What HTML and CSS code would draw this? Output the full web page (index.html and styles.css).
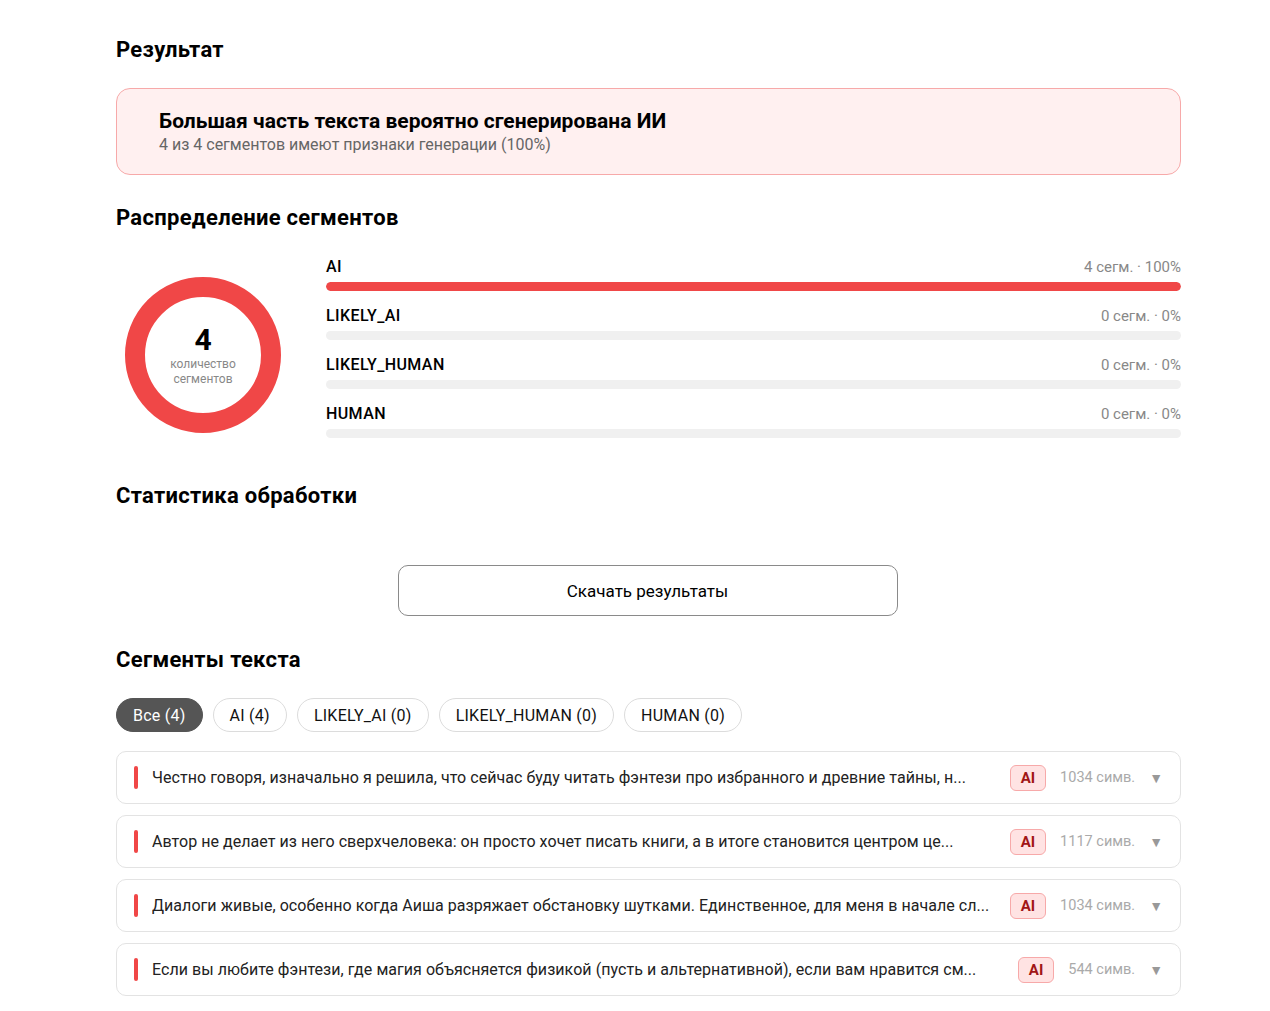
FILE: index.html
```html
<!DOCTYPE html>
<html lang="ru">
<head>
<meta charset="utf-8">
<title>Результат</title>
<link rel="stylesheet" href="styles.css">
</head>
<body>
<main class="page">
  <h2 class="h">Результат</h2>
  <div class="verdict">
    <div class="verdict-title">Большая часть текста вероятно сгенерирована ИИ</div>
    <div class="verdict-sub">4 из 4 сегментов имеют признаки генерации (100%)</div>
  </div>

  <h2 class="h h-dist">Распределение сегментов</h2>
  <div class="dist">
    <div class="donut">
      <svg width="156" height="156" viewBox="0 0 156 156">
        <circle cx="78" cy="78" r="68" fill="none" stroke="#f04747" stroke-width="20"/>
      </svg>
      <div class="donut-center">
        <div class="donut-num">4</div>
        <div class="donut-lbl">количество<br>сегментов</div>
      </div>
    </div>
    <div class="bars">
      <div class="bar-row">
        <div class="bar-head"><span class="bar-name">AI</span><span class="bar-val">4 сегм. · 100%</span></div>
        <div class="bar-track"><div class="bar-fill" style="width:100%"></div></div>
      </div>
      <div class="bar-row">
        <div class="bar-head"><span class="bar-name">LIKELY_AI</span><span class="bar-val">0 сегм. · 0%</span></div>
        <div class="bar-track"><div class="bar-fill" style="width:0%"></div></div>
      </div>
      <div class="bar-row">
        <div class="bar-head"><span class="bar-name">LIKELY_HUMAN</span><span class="bar-val">0 сегм. · 0%</span></div>
        <div class="bar-track"><div class="bar-fill" style="width:0%"></div></div>
      </div>
      <div class="bar-row">
        <div class="bar-head"><span class="bar-name">HUMAN</span><span class="bar-val">0 сегм. · 0%</span></div>
        <div class="bar-track"><div class="bar-fill" style="width:0%"></div></div>
      </div>
    </div>
  </div>

  <h2 class="h h-stat">Статистика обработки</h2>
  <div class="dl-wrap"><button class="dl">Скачать результаты</button></div>

  <h2 class="h h-seg">Сегменты текста</h2>
  <div class="chips">
    <button class="chip chip-active">Все (4)</button>
    <button class="chip">AI (4)</button>
    <button class="chip">LIKELY_AI (0)</button>
    <button class="chip">LIKELY_HUMAN (0)</button>
    <button class="chip">HUMAN (0)</button>
  </div>

  <div class="segs">
    <div class="seg">
      <span class="seg-mark"></span>
      <span class="seg-text">Честно говоря, изначально я решила, что сейчас буду читать фэнтези про избранного и древние тайны, н...</span>
      <span class="badge">AI</span>
      <span class="seg-count">1034 симв.</span>
      <span class="seg-arrow">▼</span>
    </div>
    <div class="seg">
      <span class="seg-mark"></span>
      <span class="seg-text">Автор не делает из него сверхчеловека: он просто хочет писать книги, а в итоге становится центром це...</span>
      <span class="badge">AI</span>
      <span class="seg-count">1117 симв.</span>
      <span class="seg-arrow">▼</span>
    </div>
    <div class="seg">
      <span class="seg-mark"></span>
      <span class="seg-text">Диалоги живые, особенно когда Аиша разряжает обстановку шутками. Единственное, для меня в начале сл...</span>
      <span class="badge">AI</span>
      <span class="seg-count">1034 симв.</span>
      <span class="seg-arrow">▼</span>
    </div>
    <div class="seg">
      <span class="seg-mark"></span>
      <span class="seg-text">Если вы любите фэнтези, где магия объясняется физикой (пусть и альтернативной), если вам нравится см...</span>
      <span class="badge">AI</span>
      <span class="seg-count">544 симв.</span>
      <span class="seg-arrow">▼</span>
    </div>
  </div>
</main>
</body>
</html>
```

FILE: styles.css
```css
* { box-sizing: border-box; }
html, body { margin: 0; padding: 0; background: #fff; }
body {
  font-family: Roboto, "Noto Sans", "Liberation Sans", sans-serif;
  color: #111;
}
.page {
  width: 1065px;
  margin-left: 116px;
  padding-top: 37px;
}
.h {
  margin: 0;
  font-size: 22px;
  line-height: 26px;
  font-weight: 700;
  letter-spacing: 0.3px;
  color: #000;
}
.verdict {
  margin-top: 25px;
  height: 87px;
  border: 1px solid #f7a9a9;
  background: #fff0f0;
  border-radius: 14px;
  padding: 19px 42px 0;
}
.verdict-title {
  font-size: 21px;
  line-height: 26px;
  font-weight: 700;
  color: #000;
}
.verdict-sub {
  font-size: 16px;
  line-height: 20px;
  color: #666;
  margin-top: 1px;
}
.h-dist { margin-top: 30px; }
.dist {
  display: flex;
  align-items: flex-start;
  margin-top: 26px;
}
.donut {
  position: relative;
  width: 156px;
  height: 156px;
  margin: 20px 0 0 9px;
  flex: none;
}
.donut svg { display: block; }
.donut-center {
  position: absolute;
  inset: 0;
  display: flex;
  flex-direction: column;
  align-items: center;
  justify-content: center;
  padding-top: 2px;
}
.donut-num {
  font-size: 30px;
  line-height: 30px;
  font-weight: 700;
  color: #000;
}
.donut-lbl {
  font-size: 12px;
  line-height: 15px;
  color: #888;
  text-align: center;
  margin-top: 2px;
}
.bars {
  flex: 1;
  margin-left: 45px;
  display: flex;
  flex-direction: column;
  gap: 15px;
}
.bar-head {
  display: flex;
  justify-content: space-between;
  align-items: baseline;
  height: 20px;
  line-height: 20px;
}
.bar-name {
  font-size: 16px;
  font-weight: 500;
  letter-spacing: 0.4px;
  color: #000;
}
.bar-val {
  font-size: 15px;
  color: #888;
}
.bar-track {
  margin-top: 5px;
  height: 9px;
  border-radius: 5px;
  background: #f0f0f0;
  overflow: hidden;
}
.bar-fill {
  height: 100%;
  background: #f04747;
  border-radius: 5px;
}
.h-stat { margin-top: 45px; }
.dl-wrap {
  display: flex;
  justify-content: center;
  margin-top: 56px;
  padding-right: 2px;
}
.dl {
  width: 500px;
  height: 51px;
  border: 1px solid #8a8a8a;
  border-radius: 10px;
  background: #fff;
  font-family: inherit;
  font-size: 17px;
  color: #000;
  cursor: pointer;
}
.h-seg { margin-top: 31px; }
.chips {
  display: flex;
  gap: 10px;
  margin-top: 25px;
}
.chip {
  height: 34px;
  padding: 0 16px;
  border: 1px solid #dcdcdc;
  border-radius: 17px;
  background: #fff;
  font-family: inherit;
  font-size: 16px;
  letter-spacing: 0.25px;
  color: #111;
}
.chip-active {
  background: #555;
  border-color: #555;
  color: #fff;
}
.segs {
  margin-top: 19px;
  display: flex;
  flex-direction: column;
  gap: 11px;
}
.seg {
  height: 53px;
  border: 1px solid #e3e3e3;
  border-radius: 10px;
  display: flex;
  align-items: center;
  padding: 0 17px 0 17px;
}
.seg-mark {
  width: 4px;
  height: 23px;
  border-radius: 2px;
  background: #f04747;
  flex: none;
  margin-right: 14px;
}
.seg-text {
  flex: 1;
  font-size: 16px;
  letter-spacing: 0.05px;
  color: #222;
  white-space: nowrap;
  overflow: hidden;
}
.badge {
  flex: none;
  height: 26px;
  line-height: 24px;
  padding: 0 10px;
  border: 1px solid #f7a9a9;
  background: #ffe3e3;
  border-radius: 6px;
  color: #a11616;
  font-weight: 700;
  font-size: 15px;
  margin-left: 12px;
}
.seg-count {
  flex: none;
  margin-left: 14px;
  font-size: 14.5px;
  color: #aaa;
}
.seg-arrow {
  flex: none;
  margin-left: 14px;
  font-size: 14px;
  color: #999;
}
```
